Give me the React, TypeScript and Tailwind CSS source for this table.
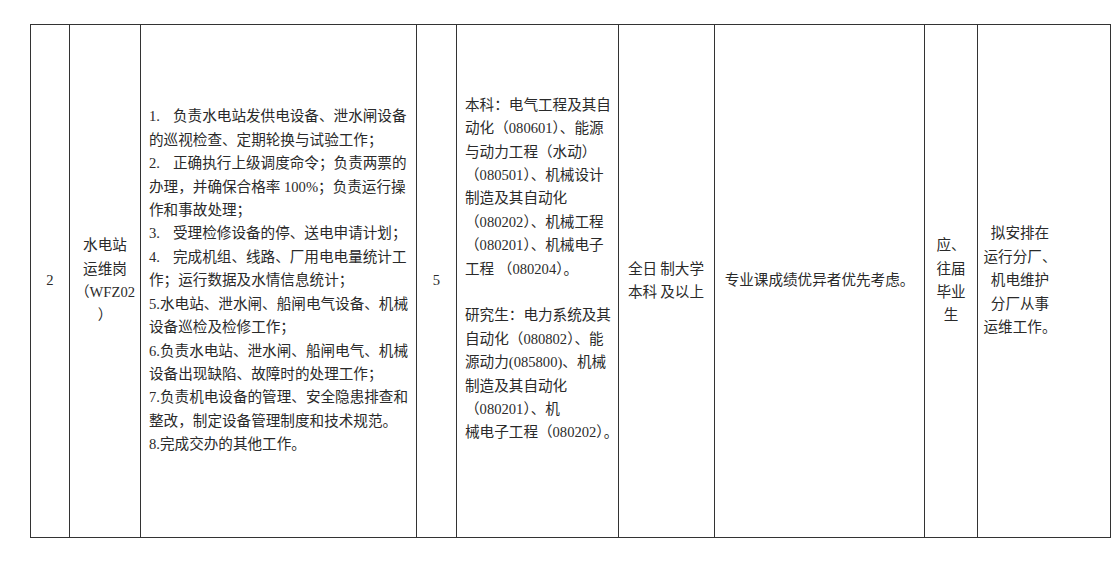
import React from "react";

const font = {
  fontFamily: '"Liberation Serif", "Noto Sans CJK SC", serif',
};

type Line = { p?: string; t: string };

const duties: Line[] = [
  { p: "1.", t: "负责水电站发供电设备、泄水闸设备" },
  { t: "的巡视检查、定期轮换与试验工作；" },
  { p: "2.", t: "正确执行上级调度命令；负责两票的" },
  { t: "办理，并确保合格率 100%；负责运行操" },
  { t: "作和事故处理；" },
  { p: "3.", t: "受理检修设备的停、送电申请计划；" },
  { p: "4.", t: "完成机组、线路、厂用电电量统计工" },
  { t: "作；运行数据及水情信息统计；" },
  { t: "5.水电站、泄水闸、船闸电气设备、机械" },
  { t: "设备巡检及检修工作；" },
  { t: "6.负责水电站、泄水闸、船闸电气、机械" },
  { t: "设备出现缺陷、故障时的处理工作；" },
  { t: "7.负责机电设备的管理、安全隐患排查和" },
  { t: "整改，制定设备管理制度和技术规范。" },
  { t: "8.完成交办的其他工作。" },
];

const majors = [
  "本科：电气工程及其自",
  "动化（080601）、能源",
  "与动力工程（水动）",
  "（080501）、机械设计",
  "制造及其自动化",
  "（080202）、机械工程",
  "（080201）、机械电子",
  "工程\u00a0（080204）。",
  "\u00a0",
  "研究生：电力系统及其",
  "自动化（080802）、能",
  "源动力(085800)、机械",
  "制造及其自动化",
  "（080201）、机",
  "械电子工程（080202）。",
  "\u00a0",
];

function Lines({ lines, center }: { lines: string[]; center?: boolean }) {
  return (
    <div className={center ? "text-center" : "text-left"}>
      {lines.map((l, i) => (
        <div key={i} className="whitespace-nowrap">
          {l}
        </div>
      ))}
    </div>
  );
}

export default function App() {
  return (
    <div className="w-[1111px] h-[561px] bg-white pt-[24px] pl-[30px]" style={font}>
      <div className="flex h-[514px] border-t border-b border-r border-[#333] text-[14.6px] leading-[23.4px] text-[#2a2a2a]">
        <div className="w-[39px] border-l border-[#333] flex items-center justify-center">2</div>
        <div className="w-[71px] border-l border-[#333] flex items-center justify-center">
          <Lines center lines={["水电站", "运维岗", "（WFZ02", "）"]} />
        </div>
        <div className="w-[276px] border-l border-[#333] flex items-center pl-[8px]">
          <div>
            {duties.map((l, i) => (
              <div key={i} className="whitespace-nowrap">
                {l.p && <span className="inline-block w-[24px]">{l.p}</span>}
                {l.t}
              </div>
            ))}
          </div>
        </div>
        <div className="w-[40px] border-l border-[#333] flex items-center justify-center">5</div>
        <div className="w-[162px] border-l border-[#333] flex items-center pl-[8px]">
          <Lines lines={majors} />
        </div>
        <div className="w-[96px] border-l border-[#333] flex items-center pl-[9px]">
          <div>
            <div className="whitespace-nowrap">
              全日<span className="ml-[3px]">制大学</span>
            </div>
            <div className="whitespace-nowrap">
              本科<span className="ml-[3px]">及以上</span>
            </div>
          </div>
        </div>
        <div className="w-[210px] border-l border-[#333] flex items-center justify-center">
          专业课成绩优异者优先考虑。
        </div>
        <div className="w-[53px] border-l border-[#333] flex items-center justify-center">
          <Lines center lines={["应、", "往届", "毕业", "生"]} />
        </div>
        <div className="w-[85px] border-l border-[#333] flex items-center justify-center">
          <Lines center lines={["拟安排在", "运行分厂、", "机电维护", "分厂从事", "运维工作。"]} />
        </div>
      </div>
    </div>
  );
}
